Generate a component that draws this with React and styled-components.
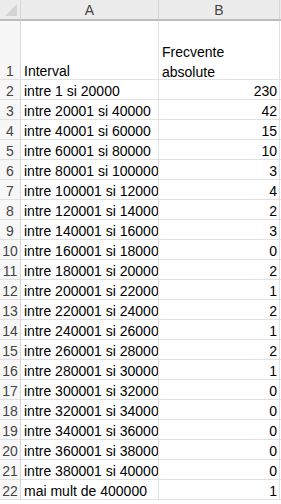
import React from 'react';
import styled, { createGlobalStyle } from 'styled-components';

const rows = [
  ['intre 1 si 20000', 230],
  ['intre 20001 si 40000', 42],
  ['intre 40001 si 60000', 15],
  ['intre 60001 si 80000', 10],
  ['intre 80001 si 100000', 3],
  ['intre 100001 si 120000', 4],
  ['intre 120001 si 140000', 2],
  ['intre 140001 si 160000', 3],
  ['intre 160001 si 180000', 0],
  ['intre 180001 si 200000', 2],
  ['intre 200001 si 220000', 1],
  ['intre 220001 si 240000', 2],
  ['intre 240001 si 260000', 1],
  ['intre 260001 si 280000', 2],
  ['intre 280001 si 300000', 1],
  ['intre 300001 si 320000', 0],
  ['intre 320001 si 340000', 0],
  ['intre 340001 si 360000', 0],
  ['intre 360001 si 380000', 0],
  ['intre 380001 si 400000', 0],
  ['mai mult de 400000', 1],
];

const GlobalStyle = createGlobalStyle`
  body {
    margin: 0;
    background: #ffffff;
    font-family: "Liberation Sans", Arial, sans-serif;
  }
`;

const Sheet = styled.div`
  display: grid;
  grid-template-columns: 21px 138px 121px 1fr;
  grid-template-rows: 21px 59px;
  grid-auto-rows: 20px;
  width: 281px;
  height: 504px;
  overflow: hidden;
  font-size: 14px;
  color: #000;
`;

const Corner = styled.div`
  background: #ececec;
  border-right: 1px solid #d6d6d6;
  border-bottom: 2px solid #bdbdbd;
  display: flex;
  align-items: flex-end;
  justify-content: flex-end;
  padding: 0 3px 3px 0;
  box-sizing: border-box;
`;

const Triangle = styled.div`
  width: 0;
  height: 0;
  border-left: 12px solid transparent;
  border-bottom: 12px solid #d4d4d4;
`;

const ColHead = styled.div`
  background: #ececec;
  border-right: 1px solid #d6d6d6;
  border-bottom: 2px solid #bdbdbd;
  box-sizing: border-box;
  display: flex;
  align-items: center;
  justify-content: center;
  color: #444;
  font-size: 14px;
`;

const RowHead = styled.div`
  background: #f7f7f7;
  border-right: 1px solid #d6d6d6;
  border-bottom: 1px solid #e1e1e1;
  box-sizing: border-box;
  display: flex;
  align-items: flex-end;
  justify-content: center;
  line-height: 14px;
  padding-bottom: 1px;
  color: #444;
`;

const Cell = styled.div`
  border-right: 1px solid #e1e1e1;
  border-bottom: 1px solid #e1e1e1;
  box-sizing: border-box;
  display: flex;
  align-items: flex-end;
  justify-content: ${p => (p.$num ? 'flex-end' : 'flex-start')};
  padding: 0 2px 1px 3px;
  line-height: 14px;
  white-space: nowrap;
  overflow: hidden;
`;

const Wrap = styled.div`
  white-space: normal;
  line-height: 20px;
  margin-bottom: -4px;
`;

const Filler = styled.div`
  border-bottom: 1px solid #e1e1e1;
`;

const HeadFiller = styled.div`
  background: #ececec;
  border-bottom: 2px solid #bdbdbd;
`;

export default function App() {
  return (
    <>
      <GlobalStyle />
      <Sheet>
        <Corner><Triangle /></Corner>
        <ColHead>A</ColHead>
        <ColHead>B</ColHead>
        <HeadFiller />

        <RowHead>1</RowHead>
        <Cell>Interval</Cell>
        <Cell>
          <Wrap>Frecvente<br />absolute</Wrap>
        </Cell>
        <Filler />

        {rows.map(([label, value], i) => (
          <React.Fragment key={i}>
            <RowHead>{i + 2}</RowHead>
            <Cell>{label}</Cell>
            <Cell $num>{value}</Cell>
            <Filler />
          </React.Fragment>
        ))}
      </Sheet>
    </>
  );
}
